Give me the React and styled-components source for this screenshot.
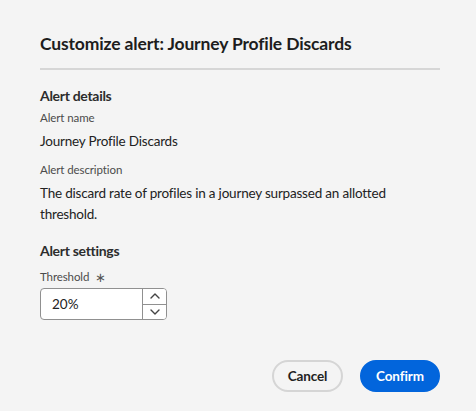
import styled, { createGlobalStyle } from "styled-components";

const Global = createGlobalStyle`
  html, body {
    margin: 0;
    padding: 0;
    background: #f4f4f4;
  }
  * { box-sizing: border-box; }
`;

const Dialog = styled.div`
  width: 476px;
  height: 411px;
  padding: 33px 36px 0 40px;
  font-family: "Lato", "Noto Sans", sans-serif;
  color: #222;
  background: #f4f4f4;
  display: flex;
  flex-direction: column;
`;

const Heading = styled.h2`
  margin: 0;
  font-size: 17.5px;
  line-height: 22px;
  letter-spacing: -0.15px;
  font-weight: 700;
  color: #1d1d1d;
`;

const Divider = styled.hr`
  margin: 13px 0 0;
  width: 400px;
  height: 2px;
  border: 0;
  background: #d6d6d6;
`;

const SectionTitle = styled.h3`
  margin: ${(p) => p.$top}px 0 0;
  font-size: 14px;
  line-height: 18px;
  letter-spacing: -0.3px;
  font-weight: 700;
  color: #2c2c2c;
`;

const Label = styled.div`
  margin-top: ${(p) => p.$top}px;
  font-size: 11.5px;
  line-height: 16px;
  letter-spacing: -0.1px;
  color: #4b4b4b;
  display: flex;
  align-items: center;
  gap: 6px;
`;

const Value = styled.p`
  margin: ${(p) => p.$top}px 0 0;
  font-size: 13.5px;
  line-height: 21px;
  letter-spacing: -0.2px;
  color: #222;
  max-width: 380px;
`;

const Star = styled.span`
  font-size: 13px;
  color: #555;
`;

const NumberField = styled.div`
  margin-top: 3px;
  width: 127px;
  height: 32px;
  display: flex;
  border: 1px solid #909090;
  border-radius: 4px;
  background: #fff;
  overflow: hidden;
`;

const Input = styled.input`
  flex: 1;
  min-width: 0;
  border: 0;
  outline: none;
  padding: 0 11px;
  font-family: inherit;
  font-size: 13.5px;
  color: #222;
  background: transparent;
`;

const Steppers = styled.div`
  width: 24px;
  border-left: 1px solid #909090;
  display: flex;
  flex-direction: column;
`;

const Step = styled.button`
  flex: 1;
  border: 0;
  padding: 0;
  background: #fff;
  display: flex;
  align-items: center;
  justify-content: center;
  & + & {
    border-top: 1px solid #909090;
  }
`;

const Footer = styled.div`
  margin-top: 40px;
  width: 400px;
  display: flex;
  justify-content: flex-end;
  gap: 17px;
`;

const Button = styled.button`
  height: 32px;
  width: ${(p) => (p.$primary ? 80 : 71)}px;
  padding: 0;
  border-radius: 16px;
  font-family: inherit;
  font-size: 13.5px;
  letter-spacing: -0.1px;
  font-weight: 700;
  border: 2px solid ${(p) => (p.$primary ? "#0265dc" : "#d5d5d5")};
  background: ${(p) => (p.$primary ? "#0265dc" : "transparent")};
  color: ${(p) => (p.$primary ? "#fff" : "#222")};
`;

const Chevron = ({ up }) => (
  <svg width="10" height="6" viewBox="0 0 10 6">
    <path
      d={up ? "M1 5 L5 1 L9 5" : "M1 1 L5 5 L9 1"}
      fill="none"
      stroke="#444"
      strokeWidth="1.4"
      strokeLinecap="round"
      strokeLinejoin="round"
    />
  </svg>
);

const App = () => {
  return (
    <Dialog>
      <Global />
      <Heading>Customize alert: Journey Profile Discards</Heading>
      <Divider />
      <SectionTitle $top={17}>Alert details</SectionTitle>
      <Label $top={5}>Alert name</Label>
      <Value $top={5}>Journey Profile Discards</Value>
      <Label $top={10}>Alert description</Label>
      <Value $top={5}>
        The discard rate of profiles in a journey surpassed an allotted threshold.
      </Value>
      <SectionTitle $top={17}>Alert settings</SectionTitle>
      <Label $top={9}>
        Threshold <Star>∗</Star>
      </Label>
      <NumberField>
        <Input defaultValue="20%" />
        <Steppers>
          <Step aria-label="Increment">
            <Chevron up />
          </Step>
          <Step aria-label="Decrement">
            <Chevron />
          </Step>
        </Steppers>
      </NumberField>
      <Footer>
        <Button>Cancel</Button>
        <Button $primary>Confirm</Button>
      </Footer>
    </Dialog>
  );
};

export default App;
